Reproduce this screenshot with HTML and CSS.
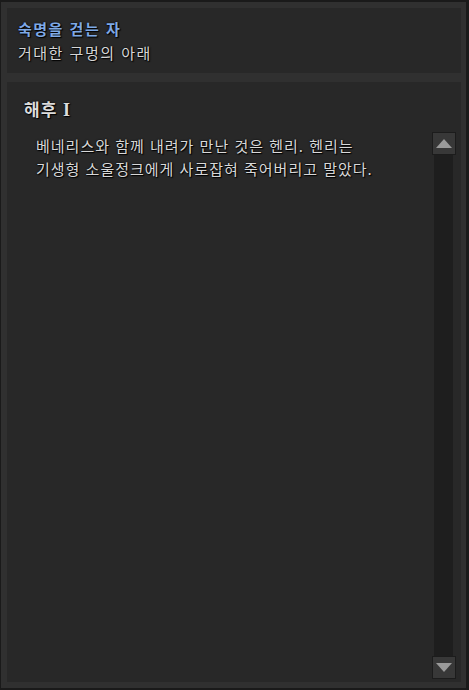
FILE: index.html
```html
<!DOCTYPE html>
<html lang="ko">
<head>
    <meta charset="UTF-8">
    <meta name="viewport" content="width=device-width, initial-scale=1.0">
    <title>해후 I</title>
    <link rel="stylesheet" href="styles.css">
</head>
<body>
    <div class="window">
        <div class="header">
            <p class="quest-name">숙명을 걷는 자</p>
            <p class="place">거대한 구멍의 아래</p>
        </div>
        <div class="content">
            <div class="story">
                <h3>해후 <span class="roman">I</span></h3>
                <p class="story-text">베네리스와 함께 내려가 만난 것은 헨리. 헨리는<br>기생형 소울정크에게 사로잡혀 죽어버리고 말았다.</p>
            </div>
            <div class="scrollbar">
                <button class="scroll-btn up"></button>
                <div class="track"></div>
                <button class="scroll-btn down"></button>
            </div>
        </div>
    </div>
</body>
</html>
```

FILE: styles.css
```css
body {
    margin: 0;
    padding: 2px 0 0 1px;
    background: #1a1a1a;
    font-family: "Noto Sans CJK KR", "Noto Sans", sans-serif;
    height: 690px;
    box-sizing: border-box;
}

.window {
    width: 465px;
    height: 686px;
    box-sizing: border-box;
    background: #303030;
    padding: 6px 5px 6px 6px;
    display: flex;
    flex-direction: column;
    gap: 9px;
}

.header {
    background: #282828;
    height: 65px;
    box-sizing: border-box;
    padding: 9px 11px;
}

.header p {
    margin: 0;
    font-size: 15px;
    line-height: 24px;
    letter-spacing: 1.5px;
    text-shadow: 0 0 2px #000, 1px 1px 1px #000;
}

.quest-name {
    color: #7fa9e6;
    font-weight: bold;
}

.place {
    color: #d6d6d6;
}

.content {
    background: #282828;
    flex: 1;
    display: flex;
}

.story {
    flex: 1;
    padding: 16px 0 0 17px;
}

.story h3 {
    margin: 0;
    font-size: 17px;
    line-height: 22px;
    letter-spacing: 1px;
    color: #dcdcdc;
    font-weight: bold;
    text-shadow: 0 0 2px #000, 1px 1px 1px #000;
}

.roman {
    font-family: "Liberation Serif", serif;
    font-size: 18px;
}

.story-text {
    margin: 13px 0 0 12px;
    font-size: 15px;
    line-height: 23px;
    letter-spacing: 1px;
    color: #d8d8d8;
    text-shadow: 0 0 2px #000, 1px 1px 1px #000;
}

.scrollbar {
    width: 24px;
    margin: 50px 5px 3px 0;
    display: flex;
    flex-direction: column;
}

.scroll-btn {
    height: 23px;
    padding: 0;
    border: 1px solid #1c1c1c;
    background: #383838;
    display: flex;
    align-items: center;
    justify-content: center;
}

.scroll-btn::before {
    content: "";
    border-left: 8px solid transparent;
    border-right: 8px solid transparent;
}

.up::before {
    border-bottom: 9px solid #9a9a9a;
}

.down::before {
    border-top: 9px solid #9a9a9a;
}

.track {
    flex: 1;
    width: 19px;
    margin-left: 2px;
    background: #1e1e1e;
}
```
